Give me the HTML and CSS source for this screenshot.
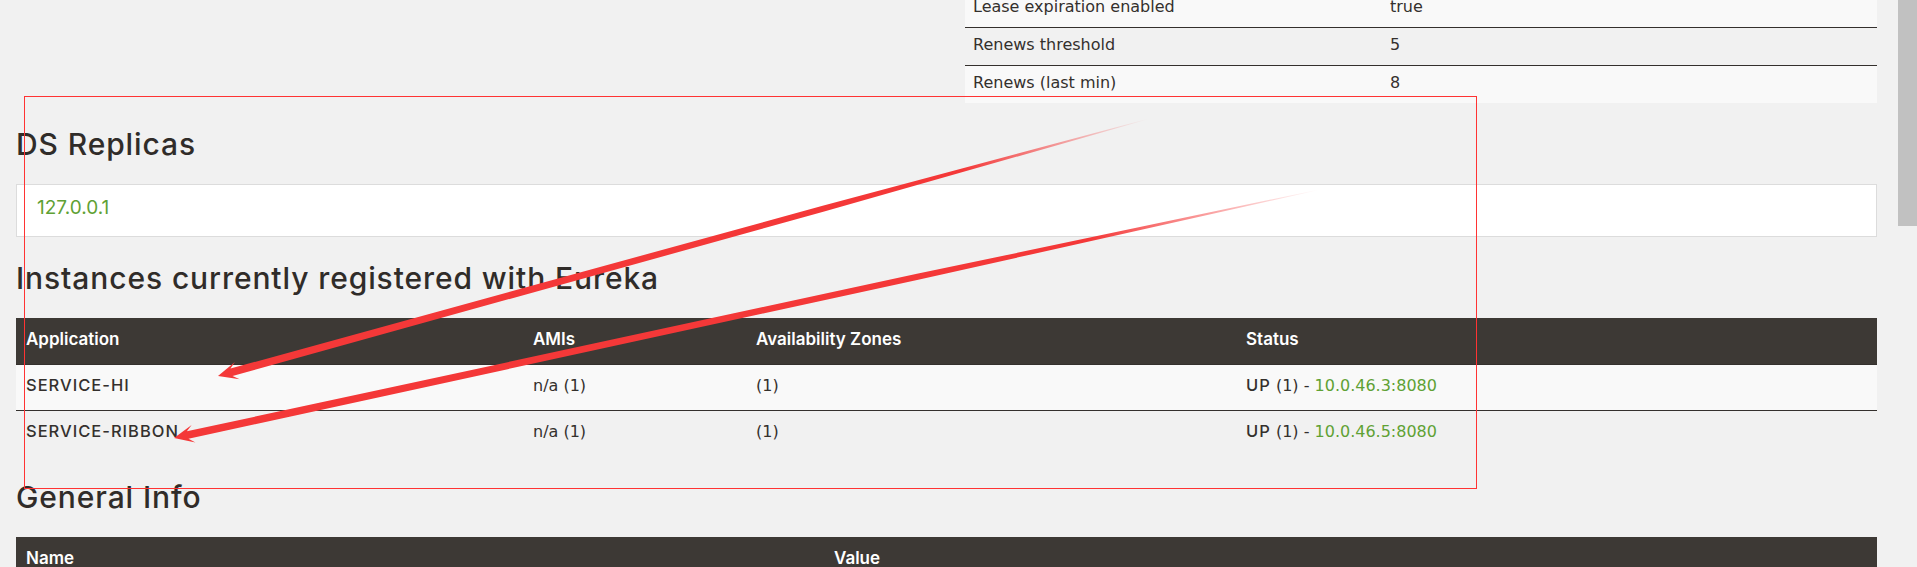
FILE: index.html
```html
<!DOCTYPE html>
<html lang="en">
<head>
<meta charset="utf-8">
<title>Eureka</title>
<link rel="stylesheet" href="styles.css">
</head>
<body>
<div class="window">
  <main class="page">
    <div class="status-grid">
      <div class="status-left"></div>
      <table class="kv-table">
        <colgroup><col class="kv-label"><col></colgroup>
        <tbody>
          <tr><td>Lease expiration enabled</td><td>true</td></tr>
          <tr><td>Renews threshold</td><td>5</td></tr>
          <tr><td>Renews (last min)</td><td>8</td></tr>
        </tbody>
      </table>
    </div>

    <h2 class="section-title">DS Replicas</h2>
    <ul class="replicas">
      <li class="replica-item"><a class="replica-link" href="#">127.0.0.1</a></li>
    </ul>

    <h2 class="section-title">Instances currently registered with Eureka</h2>
    <table class="data-table">
      <colgroup>
        <col class="c-app"><col class="c-ami"><col class="c-zone"><col class="c-status">
      </colgroup>
      <thead>
        <tr><th>Application</th><th>AMIs</th><th>Availability Zones</th><th>Status</th></tr>
      </thead>
      <tbody>
        <tr>
          <td><b class="strong">SERVICE-HI</b></td>
          <td>n/a (1)</td>
          <td>(1)</td>
          <td><b class="strong">UP</b> (1) - <a class="ip-link" href="#">10.0.46.3:8080</a></td>
        </tr>
        <tr>
          <td><b class="strong">SERVICE-RIBBON</b></td>
          <td>n/a (1)</td>
          <td>(1)</td>
          <td><b class="strong">UP</b> (1) - <a class="ip-link" href="#">10.0.46.5:8080</a></td>
        </tr>
      </tbody>
    </table>

    <h2 class="section-title">General Info</h2>
    <table class="data-table">
      <colgroup><col class="c-name"><col></colgroup>
      <thead>
        <tr><th>Name</th><th>Value</th></tr>
      </thead>
      <tbody>
        <tr><td>total-avail-memory</td><td>247mb</td></tr>
        <tr><td>environment</td><td>test</td></tr>
        <tr><td>num-of-cpus</td><td>4</td></tr>
      </tbody>
    </table>
  </main>

  <div class="scrollbar"><div class="scroll-thumb"></div></div>

  <svg class="annotations" width="1917" height="567" viewBox="0 0 1917 567" aria-hidden="true">
    <defs>
      <linearGradient id="fade1" gradientUnits="userSpaceOnUse" x1="1148" y1="119" x2="218" y2="376">
        <stop offset="0" stop-color="#f43838" stop-opacity="0"/>
        <stop offset="0.2" stop-color="#f43838" stop-opacity="1"/>
        <stop offset="1" stop-color="#f43838" stop-opacity="1"/>
      </linearGradient>
      <linearGradient id="fade2" gradientUnits="userSpaceOnUse" x1="1318" y1="190" x2="174" y2="438">
        <stop offset="0" stop-color="#f43838" stop-opacity="0"/>
        <stop offset="0.2" stop-color="#f43838" stop-opacity="1"/>
        <stop offset="1" stop-color="#f43838" stop-opacity="1"/>
      </linearGradient>
    </defs>
    <rect class="mark-box" x="24.5" y="96.5" width="1452" height="392"/>
    <polygon fill="url(#fade1)" points="1148.08,119.29 823.30,211.84 232.50,375.93 239.68,379.35 218,376 234.88,361.99 230.48,368.61 821.70,206.06 1147.92,118.71"/>
    <polygon fill="url(#fade2)" points="1318.06,190.29 918.24,279.73 188.49,438.74 195.46,442.56 174,438 191.64,424.96 186.87,431.32 916.96,273.87 1317.94,189.71"/>
  </svg>
</div>
</body>
</html>
```

FILE: styles.css
```css
html, body {
  margin: 0;
  padding: 0;
  background: #f1f1f1;
  overflow: hidden;
}

body {
  font-family: "DejaVu Sans", "Liberation Sans", sans-serif;
  font-size: 16px;
  color: #34302d;
}

.window {
  position: relative;
  display: flex;
  width: 1917px;
  height: 567px;
  overflow: hidden;
}

.page {
  flex: 1;
  min-width: 0;
  padding: 0 21px 0 16px;
}

/* top two-column status area */
.status-grid {
  display: grid;
  grid-template-columns: 1fr 1fr;
  column-gap: 37px;
  margin-top: -11px;
}

.kv-table {
  width: 100%;
  border-collapse: collapse;
  table-layout: fixed;
}

.kv-label {
  width: 417px;
}

.kv-table td {
  border-top: 1px solid #34302d;
  padding: 6px 8px 9px;
  line-height: 22px;
  text-align: left;
}

.kv-table tr:nth-child(odd) td {
  background: #f9f9f9;
}

/* headings */
.section-title {
  font-family: Inter, "DejaVu Sans", sans-serif;
  font-weight: 500;
  font-size: 30px;
  line-height: 37px;
  letter-spacing: 0.9px;
  margin: 23px 0 21px;
  color: #302c29;
}

/* DS replicas box */
.replicas {
  list-style: none;
  margin: 0;
  padding: 0;
}

.replica-item {
  background: #fff;
  border: 1px solid #dcdcdc;
  padding: 12px 20px 17px;
  line-height: 21px;
}

.replica-link {
  font-family: Inter, "DejaVu Sans", sans-serif;
  font-size: 19px;
  color: #5fa134;
  text-decoration: none;
}

/* dark header tables */
.data-table {
  width: 100%;
  border-collapse: collapse;
  table-layout: fixed;
}

.c-app { width: 507px; }
.c-ami { width: 223px; }
.c-zone { width: 490px; }
.c-status { width: 641px; }
.c-name { width: 808px; }

.data-table th {
  background: #3d3935;
  color: #fff;
  font-family: Inter, "DejaVu Sans", sans-serif;
  font-weight: 600;
  font-size: 17px;
  line-height: 30px;
  padding: 6px 10px 10px;
  text-align: left;
}

.data-table td {
  border-top: 1px solid #34302d;
  padding: 6px 10px 9px;
  line-height: 30px;
  text-align: left;
  white-space: nowrap;
}

.data-table tbody tr:nth-child(odd) td {
  background: #f9f9f9;
}

.strong {
  font-family: Inter, "DejaVu Sans", sans-serif;
  font-weight: 500;
  font-size: 16.5px;
  line-height: 16px;
  letter-spacing: 1px;
}

.ip-link {
  color: #5fa134;
  text-decoration: none;
}

/* fake browser scrollbar */
.scrollbar {
  flex: 0 0 19px;
  background: #f1f1f1;
}

.scroll-thumb {
  height: 226px;
  background: #c1c1c1;
}

/* screenshot annotations */
.annotations {
  position: absolute;
  top: 0;
  left: 0;
  pointer-events: none;
}

.mark-box {
  fill: none;
  stroke: #ff3333;
  stroke-width: 1;
}
```
